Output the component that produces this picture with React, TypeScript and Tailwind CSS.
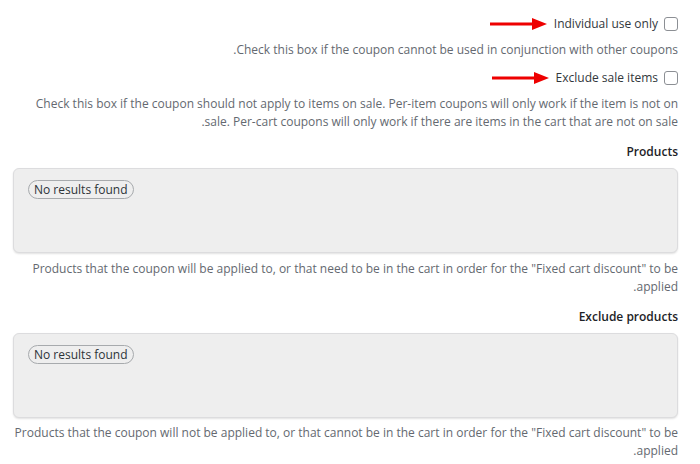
import React from "react";

const Arrow = () => (
  <svg width="58" height="14" viewBox="0 0 58 14" className="shrink-0">
    <line x1="0" y1="7" x2="44" y2="7" stroke="#ee0000" strokeWidth="3" />
    <polygon points="42,1 57,7 42,13" fill="#ee0000" />
  </svg>
);

const Check = () => (
  <span className="inline-block w-[14px] h-[14px] rounded-[3px] border border-[#8c8f94] bg-white shrink-0" />
);

const Box = () => (
  <div dir="ltr" className="h-[85px] rounded-[6px] border border-[#dcdcde] bg-[#eeeeee] shadow-[0_1px_2px_rgba(0,0,0,0.12)] pt-[11px] pl-[14px]">
    <span className="inline-flex items-center h-[19px] px-[5px] rounded-full border border-[#a7aaad] text-[12px] text-[#2c3338] leading-none">
      No results found
    </span>
  </div>
);

export default function App() {
  return (
    <div
      dir="rtl"
      className="w-[700px] h-[464px] bg-white pr-[22px] pl-[13px] text-[12px] overflow-hidden"
      style={{ fontFamily: '"Open Sans", "Noto Sans", sans-serif' }}
    >
      <div className="flex items-center gap-[6px] pt-[15px] h-[33px] text-[12px] text-[#32373c]">
        <Check />
        <span>Individual use only</span>
        <span className="flex"><Arrow /></span>
      </div>
      <p className="mt-[8px] leading-[18px] text-[#646970]">
        Check this box if the coupon cannot be used in conjunction with other coupons.
      </p>
      <div className="flex items-center gap-[6px] mt-[10px] h-[18px] text-[12px] text-[#32373c]">
        <Check />
        <span>Exclude sale items</span>
        <span className="flex"><Arrow /></span>
      </div>
      <p className="mt-[8px] leading-[18px] text-[#646970] pl-[10px]">
        Check this box if the coupon should not apply to items on sale. Per-item coupons will only work if the item is not on sale. Per-cart coupons will only work if there are items in the cart that are not on sale.
      </p>
      <div className="mt-[12px] font-semibold text-[12px] text-[#1d2327] leading-[18px]">Products</div>
      <div className="mt-[7px]"><Box /></div>
      <p className="mt-[7px] leading-[18px] text-[#646970]">
        Products that the coupon will be applied to, or that need to be in the cart in order for the "Fixed cart discount" to be applied.
      </p>
      <div className="mt-[12px] font-semibold text-[12px] text-[#1d2327] leading-[18px]">Exclude products</div>
      <div className="mt-[7px]"><Box /></div>
      <p className="mt-[6px] leading-[18px] text-[#646970]">
        Products that the coupon will not be applied to, or that cannot be in the cart in order for the "Fixed cart discount" to be applied.
      </p>
    </div>
  );
}
